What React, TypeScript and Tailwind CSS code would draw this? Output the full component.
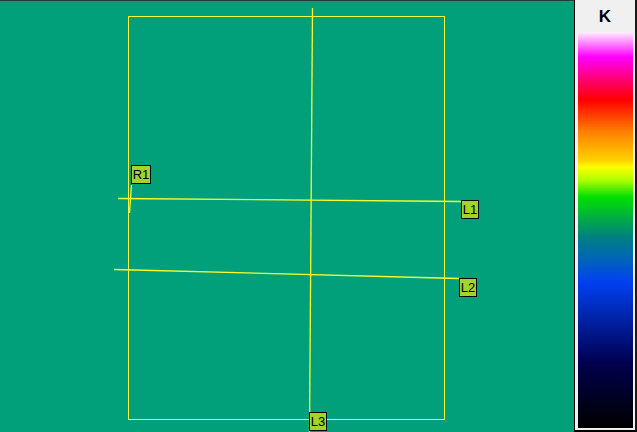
import React from 'react';

type Label = { text: string; x: number; y: number; w: number };

const labels: Label[] = [
  { text: 'R1', x: 131, y: 165, w: 20 },
  { text: 'L1', x: 461, y: 200, w: 18 },
  { text: 'L2', x: 459, y: 278, w: 18 },
  { text: 'L3', x: 309, y: 412, w: 18 },
];

const lines = [
  // vertical centre line
  { x1: 312.5, y1: 7, x2: 309.5, y2: 432 },
  // L1
  { x1: 118, y1: 197.5, x2: 461, y2: 200.5 },
  // L2
  { x1: 114, y1: 268.5, x2: 459, y2: 277.5 },
  // R1 stub
  { x1: 131.5, y1: 184, x2: 129.5, y2: 212 },
];

export default function App() {
  return (
    <div className="w-[637px] h-[432px] flex bg-[#02a07a] overflow-hidden" style={{ fontFamily: '"Liberation Sans", Arial, sans-serif' }}>
      {/* canvas */}
      <div className="relative flex-1 border-t border-[#2b3a35]">
        <svg width="574" height="431" className="absolute inset-0">
          <rect x="128.5" y="15.5" width="316" height="403" fill="none" stroke="#f4f73c" strokeWidth="1" shapeRendering="crispEdges" />
          {lines.map((l, i) => (
            <line key={i} x1={l.x1} y1={l.y1} x2={l.x2} y2={l.y2} stroke="#f8fb30" strokeWidth="1.3" />
          ))}
        </svg>
        {labels.map(l => (
          <div
            key={l.text}
            className="absolute h-[19px] bg-[#a3d42e] border border-black flex items-center justify-center text-[13px] text-black leading-none"
            style={{ left: l.x, top: l.y - 1, width: l.w }}
          >
            {l.text}
          </div>
        ))}
      </div>

      {/* colour scale */}
      <div className="w-[63px] bg-[#f0f0f0] border-l border-black border-r-2 border-r-[#1a1a1a] border-b-2 border-b-black flex flex-col items-center">
        <div className="h-[32px] pt-[2px] flex items-center justify-center text-[17px] font-bold text-black">K</div>
        <div
          className="w-[55px] flex-1 mb-[2px] ml-[1px]"
          style={{
            background:
              'linear-gradient(to bottom, #fff0ff 0px, #ff00ff 25px, #ff0070 48px, #ff0000 68px, #ff8000 100px, #ffd000 128px, #ffff00 135px, #b0ff00 148px, #00e000 165px, #00b040 185px, #008080 205px, #0060c0 230px, #0040f0 250px, #0020a0 290px, #000050 330px, #000000 395px)',
          }}
        />
      </div>
    </div>
  );
}
